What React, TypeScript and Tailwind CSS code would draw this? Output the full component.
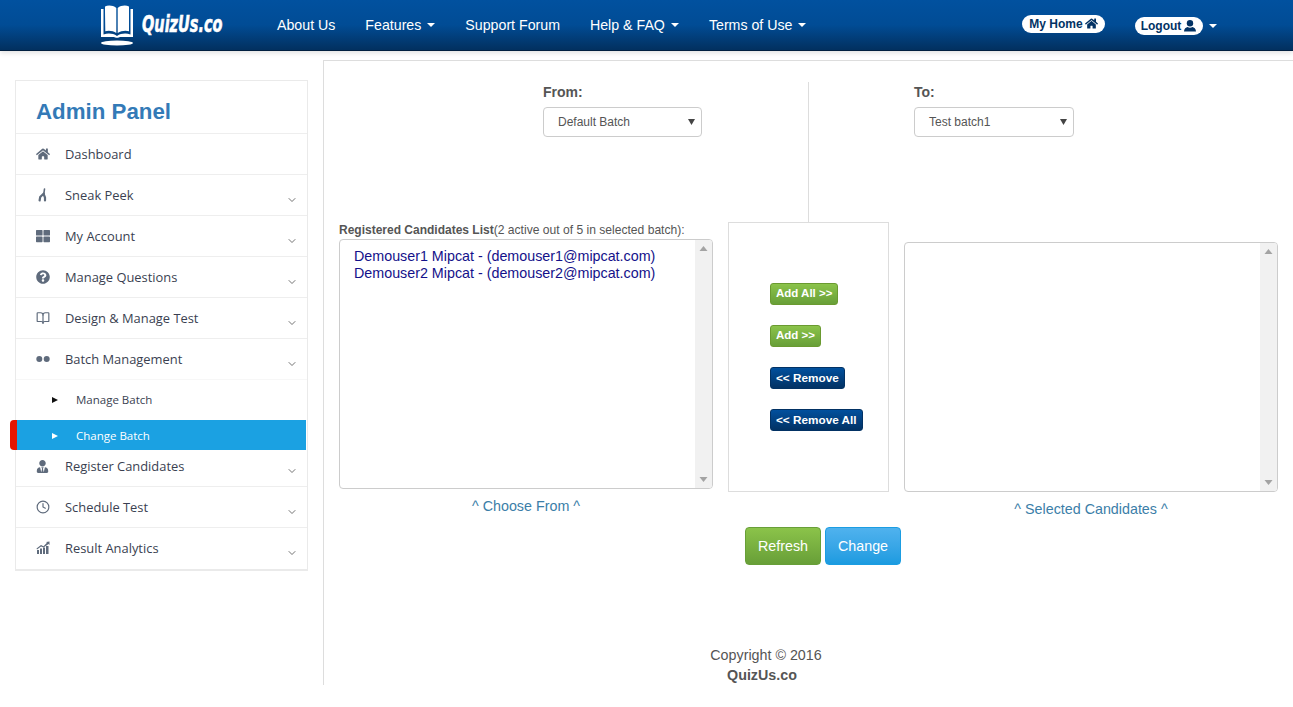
import React from "react";
import { ChevronDown } from "lucide-react";
import { FaHome, FaThLarge, FaQuestionCircle, FaUserTie } from "react-icons/fa";
import { FiClock } from "react-icons/fi";
import { LuBookOpen } from "react-icons/lu";

const Caret = ({ className = "" }: { className?: string }) => (
  <svg width="8" height="4" viewBox="0 0 8 4" className={className}>
    <path d="M0 0h8L4 4z" fill="currentColor" />
  </svg>
);

const SneakIcon = () => (
  <svg width="14" height="14" viewBox="0 0 14 14" fill="none" stroke="#5f6b7c" strokeLinecap="round">
    <path d="M8.500 1 7.800 6" strokeWidth="1.600" />
    <path d="M7.800 5.500 4.200 9 3.600 12.500" strokeWidth="2.200" />
    <path d="M7.800 6.500 9 9.500 9 12.500" strokeWidth="2.200" />
  </svg>
);

const DotsIcon = () => (
  <svg width="14" height="14" viewBox="0 0 14 14" fill="#5f6b7c">
    <circle cx="3.300" cy="7" r="3" />
    <circle cx="10.700" cy="7" r="3" />
  </svg>
);

const AnalyticsIcon = () => (
  <svg width="14" height="14" viewBox="0 0 14 14" fill="#5f6b7c">
    <rect x="1" y="9" width="2" height="4" />
    <rect x="4" y="7.500" width="2" height="5.500" />
    <rect x="7" y="6.500" width="2" height="6.500" />
    <rect x="10" y="5" width="2.500" height="8" />
    <path d="M0.500 7.500 5 4l2.500 1.200L11 1.800l-1-.8L13.500.5V4l-1-.9L7.600 6.600 5 5.400 1 8.500z" />
  </svg>
);

const UserIcon = () => (
  <svg width="14" height="12" viewBox="0 0 14 12" fill="currentColor" className="ml-[2px]">
    <circle cx="7" cy="3.200" r="3.200" />
    <path d="M1 11.500c0-3 2-4.300 3.600-4.600.7.500 1.500.8 2.400.8s1.700-.3 2.400-.8C11 7.200 13 8.500 13 11.500z" />
  </svg>
);

const BookLogo = () => (
  <svg width="34" height="44" viewBox="0 0 34 44" className="shrink-0" fill="#fff">
    <path d="M5 9V3.500C8 2 13 2.200 16.300 5v25c-3-2.400-8-2.800-11-1.800z" />
    <path d="M17.700 5C21 2.200 26 2 29 3.500v24.700c-3-1-8-.6-11.300 1.800z" />
    <path d="M1 6h2.500v25.500C8 30 13 30.300 17 33c4-2.700 9-3 13.500-1.500V6H33v28H20c-1 1-5 1-6 0H1z" />
    <ellipse cx="17" cy="40" rx="16" ry="2.500" />
  </svg>
);

const menuTop = [
  { label: "Dashboard", icon: <FaHome size={14} color="#5f6b7c" />, chevron: false },
  { label: "Sneak Peek", icon: <SneakIcon />, chevron: true },
  { label: "My Account", icon: <FaThLarge size={14} color="#5f6b7c" />, chevron: true },
  { label: "Manage Questions", icon: <FaQuestionCircle size={14} color="#5f6b7c" />, chevron: true },
  { label: "Design & Manage Test", icon: <LuBookOpen size={14} color="#5f6b7c" />, chevron: true },
];

const menuBottom = [
  { label: "Schedule Test", icon: <FiClock size={14} color="#5f6b7c" />, chevron: true },
  { label: "Result Analytics", icon: <AnalyticsIcon />, chevron: true },
];

type Item = { label: string; icon: React.ReactNode; chevron: boolean };

const MenuRow = ({ item, className = "" }: { item: Item; className?: string }) => (
  <div className={`flex h-[41px] items-start border-b border-[#eeeeee] pl-[20px] pr-[9px] pt-[11px] ${className}`}>
    <span className="flex h-[18px] w-[29px] shrink-0 items-center">{item.icon}</span>
    <span className="flex-1 text-[12.9px] leading-[18px] text-[#3a3f51]">{item.label}</span>
    {item.chevron && <ChevronDown size={12} color="#444" strokeWidth={1.5} className="mt-[8px]" />}
  </div>
);

const NavLink = ({ label, caret }: { label: string; caret?: boolean }) => (
  <span className="flex items-center gap-[6px] px-[15px] text-[14.2px] text-white">
    {label}
    {caret && <Caret />}
  </span>
);

const Scrollbar = () => (
  <div className="flex w-[17px] shrink-0 flex-col justify-between rounded-r-[3px] bg-[#f1f1f1] py-[6px]">
    <svg width="17" height="5" viewBox="0 0 17 5"><path d="M4.500 5h8L8.500 0z" fill="#a3a3a3" /></svg>
    <svg width="17" height="5" viewBox="0 0 17 5"><path d="M4.500 0h8L8.500 5z" fill="#a3a3a3" /></svg>
  </div>
);

const Select = ({ value, width }: { value: string; width: string }) => (
  <div className={`flex h-[30px] items-center justify-between rounded-[4px] border border-[#cccccc] pl-[14px] pr-[6px] text-[12px] text-[#555555] ${width}`}>
    <span>{value}</span>
    <svg width="7" height="6" viewBox="0 0 7 6"><path d="M0 0h7L3.500 6z" fill="#444" /></svg>
  </div>
);

const SmallBtn = ({ label, kind }: { label: string; kind: "green" | "blue" }) => (
  <span
    className={`flex h-[22px] w-fit items-center rounded-[3px] border px-[5px] font-bold text-white ${
      kind === "green"
        ? "border-[#6a9a30] bg-gradient-to-b from-[#8bc34a] to-[#689f38] text-[11.5px]"
        : "border-[#023264] bg-gradient-to-b from-[#01509e] to-[#023264] text-[11.75px]"
    }`}
  >
    {label}
  </span>
);

export default function App() {
  return (
    <div className="min-h-[707px] bg-white font-['Liberation_Sans',Arial,sans-serif] text-[14.3px] text-[#555555]">
      <header className="flex h-[51px] items-center border-b border-[#011f3f] bg-gradient-to-b from-[#01519f] via-[#014c95] to-[#02305f] pl-[100px] shadow-[0_2px_5px_rgba(0,0,0,0.12)]">
        <BookLogo />
        <span className="-mt-[1px] ml-[8px] w-[80px] origin-left scale-x-[0.63] font-['DejaVu_Sans',sans-serif] text-[23px] font-bold italic leading-none text-white whitespace-nowrap [-webkit-text-stroke:0.6px_white]">
          QuizUs.co
        </span>
        <nav className="ml-[40px] mt-[1px] flex items-center">
          <NavLink label="About Us" />
          <NavLink label="Features" caret />
          <NavLink label="Support Forum" />
          <NavLink label="Help & FAQ" caret />
          <NavLink label="Terms of Use" caret />
        </nav>
        <div className="ml-auto mt-[1px] flex items-center pr-[76px]">
          <span className="-mt-[4px] flex h-[18px] w-[83px] items-center justify-center gap-[2px] rounded-full bg-white text-[12px] font-bold text-[#023264]">
            My Home <FaHome size={13} />
          </span>
          <span className="ml-[30px] flex h-[18px] w-[68px] items-center justify-center rounded-full bg-white text-[12px] font-bold text-[#023264]">
            Logout <UserIcon />
          </span>
          <Caret className="ml-[6px] text-white" />
        </div>
      </header>

      <div className="flex">
        <aside className="w-[323px] shrink-0 pl-[15px] pt-[29px]">
          <div className="w-[293px] border border-b-2 border-[#eaeaea] font-['Open_Sans',sans-serif]">
            <div className="flex h-[53px] items-center border-b border-[#eeeeee] pl-[20px] pt-[9px] font-['Liberation_Sans',sans-serif] text-[22.3px] font-bold text-[#337ab7]">
              Admin Panel
            </div>
            {menuTop.map((m) => (
              <MenuRow key={m.label} item={m} />
            ))}
            <MenuRow item={{ label: "Batch Management", icon: <DotsIcon />, chevron: true }} className="border-[#f7f7f7]" />
            <div className="flex h-[40px] items-center pl-[36px] text-[11.5px] text-[#3a3f51]">
              <svg width="6" height="6" viewBox="0 0 6 6" className="mr-[18px]"><path d="M0 0l6 3-6 3z" fill="#111" /></svg>
              Manage Batch
            </div>
            <div className="-ml-[6px] mr-[1px] flex h-[30px] items-center rounded-l-[4px] border-l-[7px] border-[#e81500] bg-[#1ba1e2] pl-[35px] pt-[1px] text-[11.5px] text-white">
              <svg width="6" height="6" viewBox="0 0 6 6" className="mr-[18px]"><path d="M0 0l6 3-6 3z" fill="#fff" /></svg>
              Change Batch
            </div>
            <div className="flex h-[37px] items-start border-b border-[#eeeeee] pl-[20px] pr-[9px] pt-[7px]">
              <span className="flex h-[18px] w-[29px] shrink-0 items-center"><FaUserTie size={13} color="#5f6b7c" /></span>
              <span className="flex-1 text-[12.9px] leading-[18px] text-[#3a3f51]">Register Candidates</span>
              <ChevronDown size={12} color="#444" strokeWidth={1.5} className="mt-[8px]" />
            </div>
            {menuBottom.map((m, i) => (
              <MenuRow key={m.label} item={m} className={i === 1 ? "h-[40px] border-b-0" : ""} />
            ))}
          </div>
        </aside>

        <main className="mt-[9px] flex-1 border-l border-t border-[#dddddd] pl-[15px] pr-[15px] pt-[21px]">
          <div className="flex h-[140px]">
            <div className="w-[470px] border-r border-[#dddddd] pl-[204px] pt-[1px]">
              <div className="mb-[6px] text-[14px] font-bold leading-[18px]">From:</div>
              <Select value="Default Batch" width="w-[159px]" />
            </div>
            <div className="pl-[105px] pt-[1px]">
              <div className="mb-[6px] text-[14px] font-bold leading-[18px]">To:</div>
              <Select value="Test batch1" width="w-[160px]" />
            </div>
          </div>

          <div className="flex items-start gap-[15px]">
            <div className="w-[374px]">
              <div className="h-[17px] whitespace-nowrap text-[12px] leading-[16px]">
                <b>Registered Candidates List</b><span className="text-[12.1px]">(2 active out of 5 in selected batch):</span>
              </div>
              <div className="flex h-[250px] rounded-[4px] border border-[#cccccc]">
                <div className="flex-1 pl-[14px] pt-[8px] text-[14.3px] leading-[17px] text-[#14118a]">
                  <div>Demouser1 Mipcat - (demouser1@mipcat.com)</div>
                  <div>Demouser2 Mipcat - (demouser2@mipcat.com)</div>
                </div>
                <Scrollbar />
              </div>
              <div className="mt-[7px] h-[20px] text-center leading-[20px] text-[#3b7ea8]">^ Choose From ^</div>
            </div>

            <div className="flex h-[270px] w-[161px] flex-col gap-[20px] border border-[#dddddd] pl-[41px] pt-[60px]">
              <SmallBtn label="Add All >>" kind="green" />
              <SmallBtn label="Add >>" kind="green" />
              <SmallBtn label="<< Remove" kind="blue" />
              <SmallBtn label="<< Remove All" kind="blue" />
            </div>

            <div className="mt-[20px] w-[374px]">
              <div className="flex h-[250px] justify-end rounded-[4px] border border-[#cccccc]">
                <Scrollbar />
              </div>
              <div className="mt-[7px] h-[20px] text-center leading-[20px] text-[#3b7ea8]">^ Selected Candidates ^</div>
            </div>
          </div>

          <div className="ml-[406px] mt-[8px] flex gap-[4px]">
            <span className="flex h-[38px] w-[76px] items-center justify-center rounded-[4px] border border-[#689f38] bg-gradient-to-b from-[#8bc34a] to-[#689f38] pt-[1px] text-white">Refresh</span>
            <span className="flex h-[38px] w-[76px] items-center justify-center rounded-[4px] border border-[#1b9de2] bg-gradient-to-b from-[#4fb2ee] to-[#1b9be0] pt-[1px] text-white">Change</span>
          </div>

          <div className="-ml-[15px] mt-[80px] w-[884px] text-center leading-[20px]">
            <div>Copyright © 2016</div>
            <div className="-ml-[8px] h-[20px] font-bold">QuizUs.co</div>
          </div>
        </main>
      </div>
    </div>
  );
}
